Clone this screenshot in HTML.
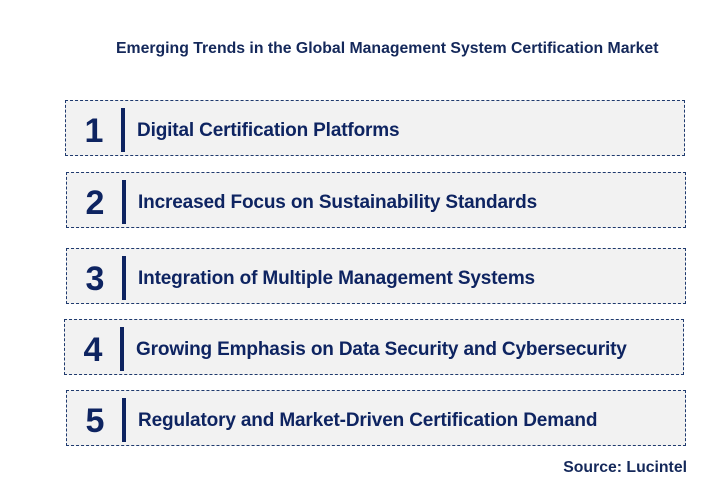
<!DOCTYPE html>
<html><head><style>
body{margin:0;width:712px;height:501px;background:#fff;font-family:"Liberation Sans",Arial,sans-serif;position:relative;overflow:hidden}
.t{position:absolute;left:116px;top:40px;font-weight:bold;font-size:15.8px;color:#14285a;white-space:nowrap}
.b{position:absolute;width:620px;height:56px;background:#f2f2f2;border:1px dashed #1f3a6e;box-sizing:border-box}
.n{position:absolute;left:13px;width:30px;text-align:center;top:11px;font-size:34px;font-weight:bold;color:#0e2461}
.bar{position:absolute;left:55px;top:7px;width:4px;height:44px;background:#0e2461}
.x{position:absolute;left:71px;top:19px;font-size:19px;font-weight:bold;color:#0e2461;letter-spacing:-0.15px;white-space:nowrap}
.s{position:absolute;right:25px;top:459px;font-weight:bold;font-size:15.8px;color:#14285a}
</style></head><body>
<div class="t">Emerging Trends in the Global Management System Certification Market</div>
<div class="b" style="left:65px;top:100px"><div class="n">1</div><div class="bar"></div><div class="x">Digital Certification Platforms</div></div>
<div class="b" style="left:66px;top:172px"><div class="n">2</div><div class="bar"></div><div class="x">Increased Focus on Sustainability Standards</div></div>
<div class="b" style="left:66px;top:248px"><div class="n">3</div><div class="bar"></div><div class="x">Integration of Multiple Management Systems</div></div>
<div class="b" style="left:64px;top:319px"><div class="n">4</div><div class="bar"></div><div class="x">Growing Emphasis on Data Security and Cybersecurity</div></div>
<div class="b" style="left:66px;top:390px"><div class="n">5</div><div class="bar"></div><div class="x">Regulatory and Market-Driven Certification Demand</div></div>
<div class="s">Source: Lucintel</div>
</body></html>
